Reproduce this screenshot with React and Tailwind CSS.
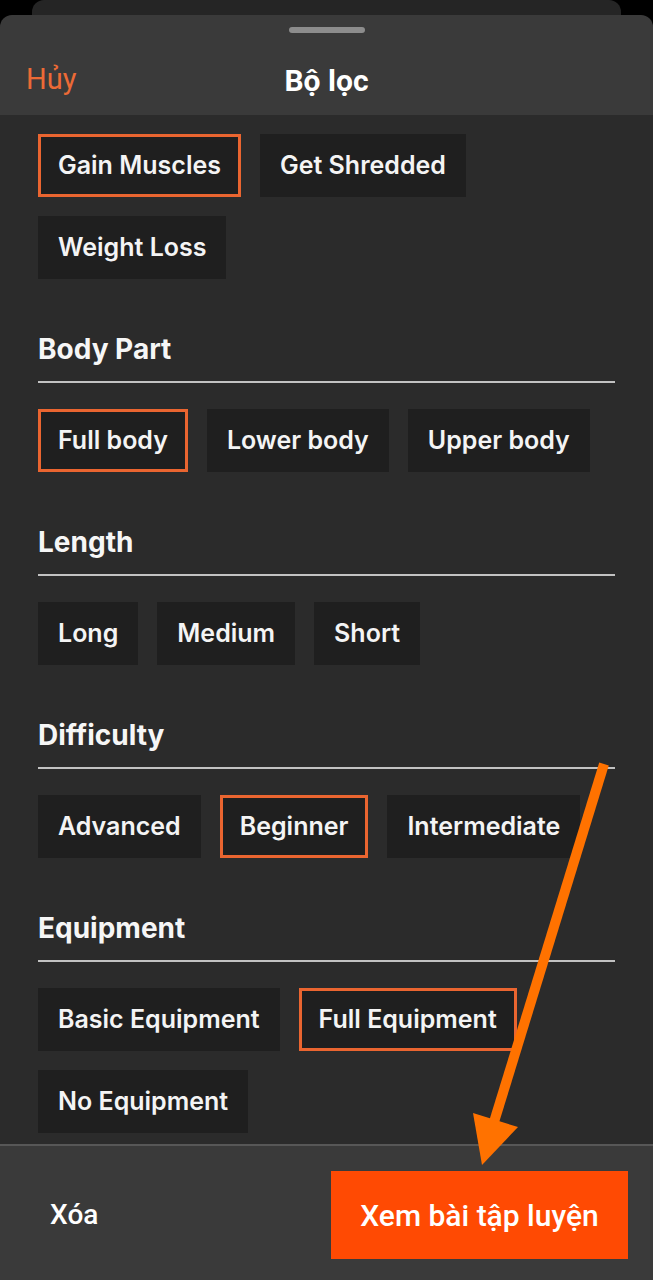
import React from "react";

const sections = [
  { title: null, items: [["Gain Muscles", true], ["Get Shredded", false], ["Weight Loss", false]] },
  { title: "Body Part", items: [["Full body", true], ["Lower body", false], ["Upper body", false]] },
  { title: "Length", items: [["Long", false], ["Medium", false], ["Short", false]] },
  { title: "Difficulty", items: [["Advanced", false], ["Beginner", true], ["Intermediate", false]] },
  { title: "Equipment", items: [["Basic Equipment", false], ["Full Equipment", true], ["No Equipment", false]] },
];

function Chip({ label, selected }) {
  return (
    <div
      className={
        "h-[63px] flex items-center px-[17px] bg-[#1f1f1f] border-[3px] text-[25px] font-semibold text-[#f4f4f4] " +
        (selected ? "border-[#ea6530]" : "border-[#1f1f1f]")
      }
      style={{ fontFamily: "Inter, 'Noto Sans', sans-serif" }}
    >
      {label}
    </div>
  );
}

export default function App() {
  return (
    <div
      className="relative w-[653px] h-[1280px] bg-black flex flex-col overflow-hidden"
      style={{ fontFamily: "Roboto, 'Noto Sans', sans-serif" }}
    >
      <div className="h-[15px] shrink-0 px-[32px]">
        <div className="h-full bg-[#252525] rounded-t-[12px]" />
      </div>
      <div className="flex-1 flex flex-col rounded-t-[12px] bg-[#3a3a3a] overflow-hidden">
        <div className="h-[100px] shrink-0 flex flex-col">
          <div className="pt-[12px] flex justify-center">
            <div className="w-[76px] h-[6px] rounded-full bg-[#8c8c8c]" />
          </div>
          <div className="mt-[12px] h-[70px] grid grid-cols-3 items-center px-[26px]">
            <div className="text-[29px] text-[#ec6a36]">Hủy</div>
            <div className="text-[30px] font-bold text-white text-center">Bộ lọc</div>
            <div />
          </div>
        </div>
        <div className="flex-1 bg-[#2b2b2b] px-[38px] pt-[19px] overflow-hidden">
          {sections.map((s, i) => (
            <div key={i} className={s.title ? "mt-[54px]" : ""}>
              {s.title && (
                <div
                  className="text-[28px] leading-[32px] font-bold text-[#f6f6f6] pb-[16px] border-b-2 border-[#c2c2c2] mb-[26px]"
                  style={{ fontFamily: "Inter, 'Noto Sans', sans-serif" }}
                >
                  {s.title}
                </div>
              )}
              <div className="flex flex-wrap gap-[19px]">
                {s.items.map(([l, sel]) => (
                  <Chip key={l} label={l} selected={sel} />
                ))}
              </div>
            </div>
          ))}
        </div>
        <div className="h-[136px] shrink-0 bg-[#3a3a3a] border-t-2 border-[#575757] flex items-start justify-between pl-[50px] pr-[25px] pt-[25px]">
          <div className="h-[88px] flex items-center text-[28px] font-medium text-white">Xóa</div>
          <div className="w-[297px] h-[88px] bg-[#ff4a03] flex items-center justify-center text-[30px] font-medium text-white">
            Xem bài tập luyện
          </div>
        </div>
      </div>
      <svg className="absolute inset-0 pointer-events-none" width="653" height="1280" viewBox="0 0 653 1280">
        <line x1="604" y1="764" x2="494" y2="1122" stroke="#ff7200" strokeWidth="10" />
        <polygon points="473,1113 518,1127 482,1165" fill="#ff7200" />
      </svg>
    </div>
  );
}
